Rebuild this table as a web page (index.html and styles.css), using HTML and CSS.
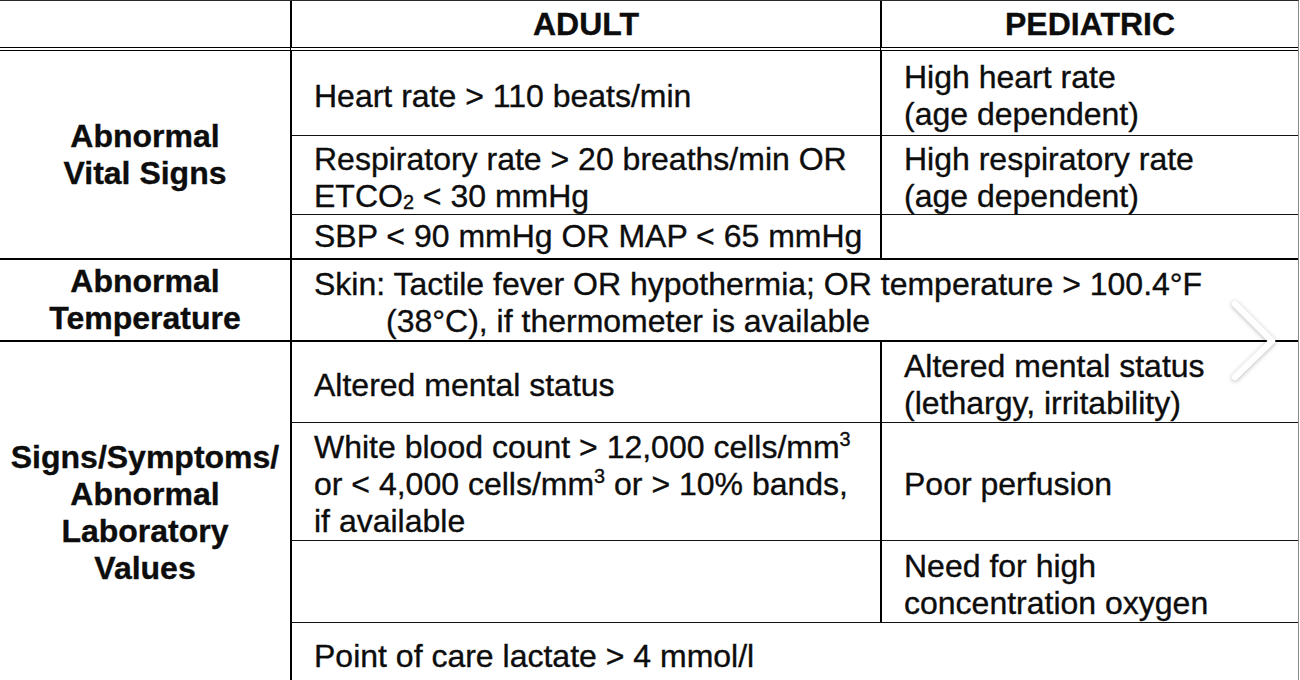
FILE: index.html
```html
<!DOCTYPE html>
<html lang="en">
<head>
<meta charset="utf-8">
<title>Sepsis criteria</title>
<link rel="stylesheet" href="styles.css">
</head>
<body>
<div class="sheet">
  <div class="cell head c-label r-head"></div>
  <div class="cell head c-adult r-head"><div class="txt">ADULT</div></div>
  <div class="cell head c-ped r-head"><div class="txt">PEDIATRIC</div></div>

  <div class="cell label c-label r-vital"><div class="txt">Abnormal<br>Vital Signs</div></div>
  <div class="cell body c-adult r1"><div class="txt">Heart rate &gt; 110 beats/min</div></div>
  <div class="cell body c-ped r1"><div class="txt">High heart rate<br>(age dependent)</div></div>
  <div class="cell body thin c-adult r2"><div class="txt">Respiratory rate &gt; 20 breaths/min OR<br>ETCO<sub>2</sub> &lt; 30 mmHg</div></div>
  <div class="cell body thin c-ped r2"><div class="txt">High respiratory rate<br>(age dependent)</div></div>
  <div class="cell body thin short c-adult r3"><div class="txt">SBP &lt; 90 mmHg OR MAP &lt; 65 mmHg</div></div>
  <div class="cell body thin short c-ped r3"></div>

  <div class="cell label thick c-label r4"><div class="txt">Abnormal<br>Temperature</div></div>
  <div class="cell body thick c-wide r4"><div class="txt hang">Skin: Tactile fever OR hypothermia; OR temperature &gt; 100.4°F<br>(38°C), if thermometer is available</div></div>

  <div class="cell label thick c-label r-signs"><div class="txt">Signs/Symptoms/<br>Abnormal<br>Laboratory<br>Values</div></div>
  <div class="cell body thick c-adult r5"><div class="txt">Altered mental status</div></div>
  <div class="cell body thick c-ped r5"><div class="txt">Altered mental status<br>(lethargy, irritability)</div></div>
  <div class="cell body thin c-adult r6"><div class="txt">White blood count &gt; 12,000 cells/mm<sup>3</sup><br>or &lt; 4,000 cells/mm<sup>3</sup> or &gt; 10% bands,<br>if available</div></div>
  <div class="cell body thin c-ped r6"><div class="txt">Poor perfusion</div></div>
  <div class="cell body thin c-adult r7"></div>
  <div class="cell body thin c-ped r7"><div class="txt">Need for high<br>concentration oxygen</div></div>
  <div class="cell body thin c-wide r8"><div class="txt">Point of care lactate &gt; 4 mmol/l</div></div>
</div>

<svg class="next-arrow" width="60" height="94" viewBox="0 0 60 94" aria-hidden="true">
  <polyline points="10,10 47,47 10,83" fill="none" stroke="#ffffff" stroke-width="6.5" stroke-linecap="round" stroke-linejoin="round"/>
</svg>
</body>
</html>
```

FILE: styles.css
```css
html, body {
  margin: 0;
  padding: 0;
  background: #ffffff;
}

body {
  position: relative;
  width: 1300px;
  height: 680px;
  overflow: hidden;
}

.sheet {
  display: grid;
  grid-template-columns: 290px 590px 418px;
  grid-template-rows: 50px 84px 79px 44px 82px 82px 118px 82px 62px;
  width: 1298px;
  border-top: 1px solid #2a2a2a;
  border-right: 1px solid #8a8a8a;
  font-family: "Liberation Sans", Arial, sans-serif;
  font-size: 32px;
  line-height: normal;
  color: #0d0d0d;
  -webkit-text-stroke: 0.35px #0d0d0d;
}

.cell {
  box-sizing: border-box;
  display: flex;
  align-items: center;
  min-width: 0;
}

.head {
  border-bottom: 4px double #000000;
  justify-content: center;
  font-weight: bold;
}

.label {
  justify-content: center;
  text-align: center;
  font-weight: bold;
}

.body {
  padding-left: 22px;
  padding-top: 6px;
  border-left: 2px solid #000000;
}

.body.short {
  padding-top: 0;
}

.head.c-adult,
.head.c-ped {
  border-left: 2px solid #000000;
}

.thin {
  border-top: 1px solid #111111;
}

.thick {
  border-top: 2px solid #000000;
}

.c-label { grid-column: 1; }
.c-adult { grid-column: 2; }
.c-ped { grid-column: 3; }
.c-wide { grid-column: 2 / 4; }

.r-head { grid-row: 1; }
.r1 { grid-row: 2; }
.r2 { grid-row: 3; }
.r3 { grid-row: 4; }
.r4 { grid-row: 5; }
.r5 { grid-row: 6; }
.r6 { grid-row: 7; }
.r7 { grid-row: 8; }
.r8 { grid-row: 9; }
.r-vital { grid-row: 2 / 5; }
.r-signs { grid-row: 6 / 10; }

.txt {
  white-space: nowrap;
}

.hang {
  padding-left: 72px;
  text-indent: -72px;
}

sub {
  font-size: 0.62em;
  line-height: 0;
  vertical-align: -0.12em;
}

sup {
  font-size: 0.62em;
  line-height: 0;
  vertical-align: 0.62em;
}

.next-arrow {
  position: absolute;
  left: 1225px;
  top: 294px;
  filter: drop-shadow(0 1px 2px rgba(0, 0, 0, 0.28));
}
```
